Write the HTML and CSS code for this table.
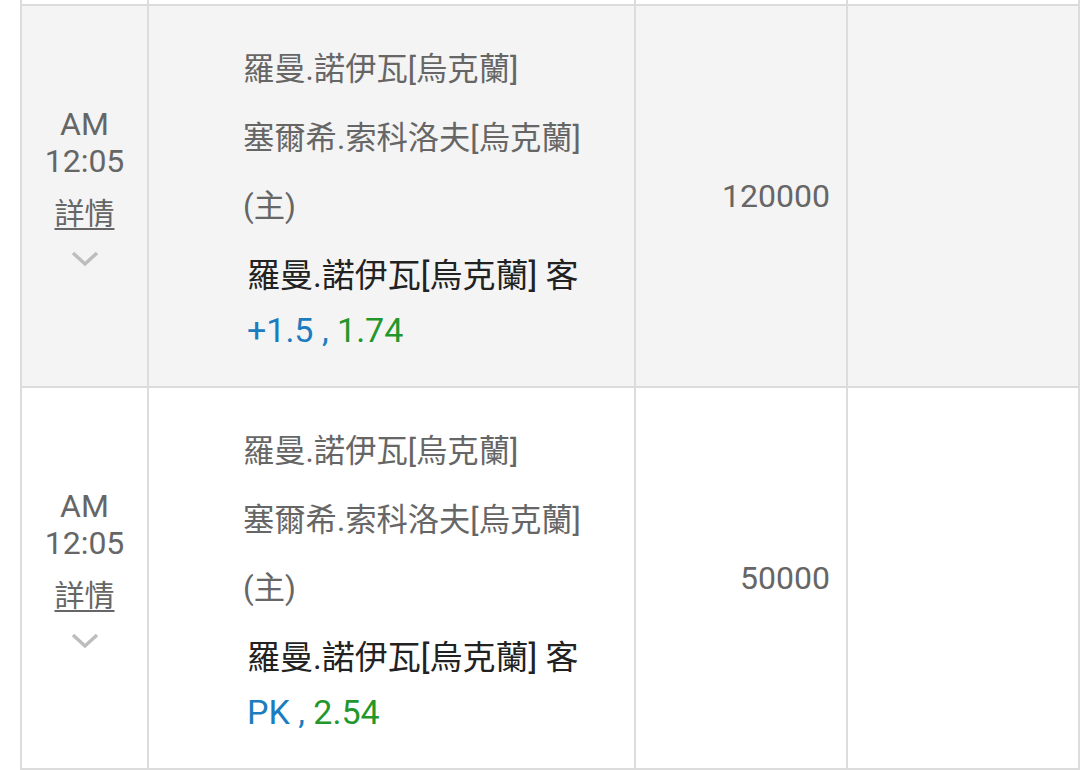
FILE: index.html
```html
<!DOCTYPE html>
<html lang="zh-Hant">
<head>
<meta charset="utf-8">
<title>注單</title>
<link rel="stylesheet" href="styles.css">
</head>
<body>
<div class="table">
  <div class="cell prev"></div>
  <div class="cell prev"></div>
  <div class="cell prev"></div>
  <div class="cell prev"></div>

  <div class="cell time alt">
    <div class="clock">AM<br>12:05</div>
    <a class="detail" href="#">詳情</a>
    <svg class="chev" width="28" height="16" viewBox="0 0 28 16"><path d="M2 2 L14 13 L26 2" fill="none" stroke="#bdbdbd" stroke-width="3.5"/></svg>
  </div>
  <div class="cell match alt">
    <div class="team">羅曼.諾伊瓦[烏克蘭]</div>
    <div class="team">塞爾希.索科洛夫[烏克蘭]</div>
    <div class="team">(主)</div>
    <div class="pick">羅曼.諾伊瓦[烏克蘭] 客</div>
    <div class="odds"><span class="hcp">+1.5 ,</span> <span class="rate">1.74</span></div>
  </div>
  <div class="cell amount alt">120000</div>
  <div class="cell blank alt"></div>

  <div class="cell time">
    <div class="clock">AM<br>12:05</div>
    <a class="detail" href="#">詳情</a>
    <svg class="chev" width="28" height="16" viewBox="0 0 28 16"><path d="M2 2 L14 13 L26 2" fill="none" stroke="#bdbdbd" stroke-width="3.5"/></svg>
  </div>
  <div class="cell match">
    <div class="team">羅曼.諾伊瓦[烏克蘭]</div>
    <div class="team">塞爾希.索科洛夫[烏克蘭]</div>
    <div class="team">(主)</div>
    <div class="pick">羅曼.諾伊瓦[烏克蘭] 客</div>
    <div class="odds"><span class="hcp">PK ,</span> <span class="rate">2.54</span></div>
  </div>
  <div class="cell amount">50000</div>
  <div class="cell blank"></div>
</div>
</body>
</html>
```

FILE: styles.css
```css
html, body {
  margin: 0;
  padding: 0;
  background: #ffffff;
}
body {
  padding-left: 20px;
  font-family: "Roboto", "Noto Sans CJK TC", sans-serif;
  color: #666666;
  overflow: hidden;
  height: 770px;
}
.table {
  display: grid;
  grid-template-columns: 125px 485px 210px 230px;
  grid-template-rows: 4px 380px 380px;
  gap: 2px;
  padding: 0 2px 2px 2px;
  background: #dcdcdc;
  width: 1060px;
  box-sizing: border-box;
}
.cell {
  background: #ffffff;
}
.cell.alt {
  background: #f4f4f4;
}
.time {
  display: flex;
  flex-direction: column;
  align-items: center;
  justify-content: center;
  padding-bottom: 20px;
  box-sizing: border-box;
  text-align: center;
}
.clock {
  font-size: 32px;
  line-height: 37px;
}
.detail {
  display: block;
  margin-top: 15px;
  font-size: 30px;
  line-height: 38px;
  color: #666666;
  text-decoration: underline;
  text-decoration-thickness: 2px;
  text-underline-offset: 4px;
}
.chev {
  display: block;
  margin-top: 18px;
}
.match {
  display: flex;
  flex-direction: column;
  justify-content: center;
  padding-left: 94px;
  padding-bottom: 4px;
  box-sizing: border-box;
}
.team {
  font-size: 31.3px;
  line-height: 68.5px;
  white-space: nowrap;
}
.pick {
  font-size: 33px;
  line-height: 67px;
  color: #222222;
  padding-left: 4px;
  white-space: nowrap;
}
.odds {
  font-size: 34px;
  line-height: 43px;
  padding-left: 4px;
}
.hcp {
  color: #1b7dbf;
}
.rate {
  color: #23972b;
}
.amount {
  display: flex;
  align-items: center;
  justify-content: flex-end;
  padding-right: 16px;
  font-size: 32px;
  box-sizing: border-box;
}
```
